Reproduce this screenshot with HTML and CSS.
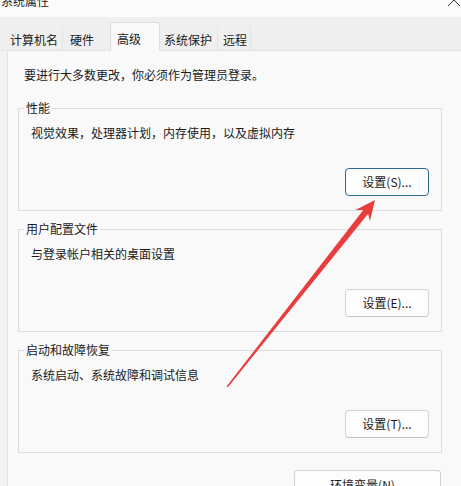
FILE: index.html
```html
<!DOCTYPE html>
<html lang="zh-CN">
<head>
<meta charset="utf-8">
<title>系统属性</title>
<link rel="stylesheet" href="styles.css">
</head>
<body>
<div class="window">
  <div class="titlebar">
    <span class="title">系统属性</span>
    <svg class="close" width="14" height="8" viewBox="0 0 14 8"><path d="M1 7 L7 1 L13 7" stroke="#333" stroke-width="1" fill="none"/></svg>
  </div>
  <div class="tabs">
    <div class="tab t1">计算机名</div>
    <div class="tab t2">硬件</div>
    <div class="tab sel">高级</div>
    <div class="tab t4">系统保护</div>
    <div class="tab t5">远程</div>
  </div>
  <div class="panel">
    <p class="note">要进行大多数更改，你必须作为管理员登录。</p>
    <fieldset class="group first">
      <legend>性能</legend>
      <p class="desc">视觉效果，处理器计划，内存使用，以及虚拟内存</p>
      <div class="row"><button class="btn focus">设置(S)...</button></div>
    </fieldset>
    <fieldset class="group">
      <legend>用户配置文件</legend>
      <p class="desc">与登录帐户相关的桌面设置</p>
      <div class="row"><button class="btn">设置(E)...</button></div>
    </fieldset>
    <fieldset class="group">
      <legend>启动和故障恢复</legend>
      <p class="desc">系统启动、系统故障和调试信息</p>
      <div class="row"><button class="btn">设置(T)...</button></div>
    </fieldset>
    <div class="envrow"><button class="btn env">环境变量(N)...</button></div>
  </div>
</div>
<svg class="arrow" width="461" height="486" viewBox="0 0 461 486">
  <polygon fill="#e93d3d" points="375,200 369.9,221.3 368.1,213.7 227.9,387.2 226.7,386.2 363.3,209.9 355.5,210.1"/>
</svg>
</body>
</html>
```

FILE: styles.css
```css
html, body {
  margin: 0;
  padding: 0;
}
body {
  width: 461px;
  height: 486px;
  overflow: hidden;
  background: #f3f3f3;
  font-family: "Noto Sans CJK SC", "Microsoft YaHei", sans-serif;
  font-size: 12px;
  line-height: 16px;
  color: #1a1a1a;
  position: relative;
}
.window {
  width: 461px;
  height: 486px;
  overflow: hidden;
}
.titlebar {
  height: 17px;
  background: #fbfbfb;
  display: flex;
  justify-content: space-between;
  overflow: hidden;
}
.title {
  margin-top: -7px;
  margin-left: 1px;
  color: #222;
}
.close {
  margin-top: -1px;
  margin-right: 0;
}
.tabs {
  height: 33px;
  background: #efefef;
  border-bottom: 1px solid #e2e2e2;
  display: flex;
  align-items: flex-end;
  padding-left: 4px;
}
.tab {
  height: 23px;
  box-sizing: border-box;
  padding-top: 5px;
  white-space: nowrap;
}
.t1 {
  padding-left: 6px;
  padding-right: 4px;
  border-right: 1px solid #e4e4e4;
}
.t2 {
  padding-left: 7px;
  padding-right: 16px;
}
.sel {
  height: 29px;
  margin-bottom: -1px;
  padding: 8px 18px 0 6px;
  background: #f9f9f9;
  border: 1px solid #dedede;
  border-bottom: none;
  border-radius: 3px 3px 0 0;
}
.t4 {
  padding-left: 4px;
  padding-right: 5px;
  border-right: 1px solid #e4e4e4;
}
.t5 {
  padding-left: 5px;
  padding-right: 3px;
  border-right: 1px solid #e4e4e4;
}
.panel {
  margin-left: 7px;
  height: 440px;
  background: #f9f9f9;
  border-left: 1px solid #e2e2e2;
  padding: 16px 0 0 10px;
}
.note {
  margin: 0 0 0 6px;
}
.group {
  width: 424px;
  box-sizing: border-box;
  margin: 10px 0 0 0;
  padding: 0 12px 14px 12px;
  border: 1px solid #dcdcdc;
  min-width: 0;
}
.group.first {
  margin-top: 17px;
}
.group legend {
  padding: 0 2px;
  margin-left: -7px;
  line-height: 16px;
}
.desc {
  margin: 9px 0 0 0;
}
.row {
  display: flex;
  justify-content: flex-end;
  margin-top: 27px;
}
.btn {
  width: 84px;
  height: 28px;
  box-sizing: border-box;
  font-family: inherit;
  font-size: 12px;
  line-height: 16px;
  color: #1a1a1a;
  background: #fdfdfd;
  border: 1px solid #d3d3d3;
  border-bottom-color: #c4c4c4;
  border-radius: 4px;
  padding: 0;
}
.btn.focus {
  border: 1px solid #2b6a92;
}
.envrow {
  width: 424px;
  display: flex;
  justify-content: flex-end;
  margin-top: 17px;
}
.btn.env {
  width: 147px;
  margin-right: 1px;
  padding-top: 2px;
}
.arrow {
  position: absolute;
  left: 0;
  top: 0;
  pointer-events: none;
}
```
